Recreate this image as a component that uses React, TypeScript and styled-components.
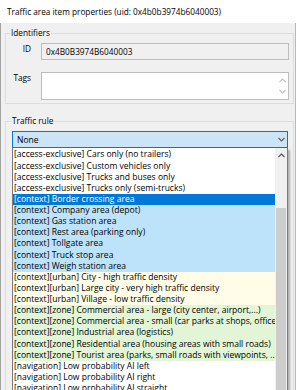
import React from 'react';
import styled, { createGlobalStyle } from 'styled-components';

const Global = createGlobalStyle`
  html, body { margin: 0; padding: 0; background: #ffffff; }
  body {
    width: 300px; height: 390px; overflow: hidden;
    font-family: "Open Sans", "Noto Sans", sans-serif;
    color: #000;
  }
  #root { width: 300px; height: 390px; }
`;

const Window = styled.div`
  width: 300px;
  height: 390px;
  display: flex;
  flex-direction: column;
  overflow: hidden;
  background: #ffffff;
  font-size: 8.25px;
`;

const TitleBar = styled.div`
  height: 23px;
  flex: none;
  display: flex;
  align-items: center;
  padding-left: 7px;
  white-space: nowrap;
  background: #ffffff;
`;

const Body = styled.div`
  flex: 1;
  min-height: 0;
  width: 296px;
  box-sizing: border-box;
  background: #f0f0f0;
  border-left: 1px solid #a3a3a3;
  border-right: 1px solid #b8b8b8;
  padding: 4px 0 0 4px;
  display: flex;
  flex-direction: column;
  gap: 11px;
  overflow: hidden;
`;

const Group = styled.fieldset`
  margin: 0;
  padding: 0;
  width: 289px;
  min-width: 0;
  box-sizing: border-box;
  border: 1px solid #dcdcdc;
  flex: none;
`;

const Legend = styled.legend<{ $offset: number }>`
  padding: 0 1px;
  margin-left: ${p => p.$offset}px;
  line-height: 12px;
  font-size: 8.25px;
  white-space: nowrap;
`;

const FieldGrid = styled.div`
  display: grid;
  grid-template-columns: 25px 1fr;
  column-gap: 10px;
  row-gap: 12px;
  padding: 4px 4px 3px 0;
`;

const FieldLabel = styled.div`
  text-align: right;
  line-height: 12px;
  white-space: nowrap;
`;

const ReadOnlyBox = styled.div`
  height: 17px;
  box-sizing: border-box;
  border: 1px solid #bcbcbc;
  background: #f0f0f0;
  display: flex;
  align-items: center;
  padding-left: 4px;
  white-space: nowrap;
`;

const MultiBox = styled.div`
  height: 28px;
  box-sizing: border-box;
  border: 1px solid #bcbcbc;
  background: #ffffff;
  display: flex;
  justify-content: flex-end;
`;

const MiniScroll = styled.div`
  width: 12px;
  display: flex;
  flex-direction: column;
  align-items: center;
  gap: 6px;
  padding-top: 5px;
`;

const RuleArea = styled.div`
  padding: 4px 5px 0 6px;
  display: flex;
  flex-direction: column;
  font-size: 8.55px;
`;

const Combo = styled.div`
  height: 17px;
  box-sizing: border-box;
  border: 1px solid #0078d7;
  background: #cce4f7;
  display: flex;
  align-items: center;
  justify-content: space-between;
  padding: 0 2px 0 4px;
`;

const DropList = styled.div`
  display: flex;
  border: 1px solid #7a7a7a;
  border-top: none;
  background: #ffffff;
  box-shadow: 2px 2px 2px rgba(0, 0, 0, 0.28);
`;

const Rows = styled.div`
  width: 262px;
  flex: none;
  padding-top: 1.4px;
  display: flex;
  flex-direction: column;
`;

type Kind = 'plain' | 'selected' | 'context' | 'urban' | 'zone';

const rowBg: Record<Kind, string> = {
  plain: '#ffffff',
  selected: '#0078d7',
  context: '#bde3fa',
  urban: '#fffde8',
  zone: '#e2f5d6',
};

const Row = styled.div<{ $kind: Kind }>`
  height: 11.14px;
  line-height: 11.14px;
  padding-left: 1px;
  white-space: nowrap;
  overflow: hidden;
  background: ${p => rowBg[p.$kind]};
  color: ${p => (p.$kind === 'selected' ? '#ffffff' : '#000000')};
`;

const ScrollTrack = styled.div`
  width: 12px;
  flex: none;
  background: #f0f0f0;
  display: flex;
  flex-direction: column;
`;

const ArrowCell = styled.div`
  height: 14px;
  display: flex;
  align-items: center;
  justify-content: center;
`;

const Thumb = styled.div`
  margin: 46px 1px 0 1px;
  height: 240px;
  background: #cdcdcd;
`;

const Chevron: React.FC<{ up?: boolean; color: string }> = ({ up, color }) => (
  <svg width="7" height="5" viewBox="0 0 7 5">
    <polyline
      points={up ? '0.5,4 3.5,1 6.5,4' : '0.5,1 3.5,4 6.5,1'}
      fill="none"
      stroke={color}
      strokeWidth="1.1"
    />
  </svg>
);

const items: { text: string; kind: Kind }[] = [
  { text: '[access-exclusive] Cars only (no trailers)', kind: 'plain' },
  { text: '[access-exclusive] Custom vehicles only', kind: 'plain' },
  { text: '[access-exclusive] Trucks and buses only', kind: 'plain' },
  { text: '[access-exclusive] Trucks only (semi-trucks)', kind: 'plain' },
  { text: '[context] Border crossing area', kind: 'selected' },
  { text: '[context] Company area (depot)', kind: 'context' },
  { text: '[context] Gas station area', kind: 'context' },
  { text: '[context] Rest area (parking only)', kind: 'context' },
  { text: '[context] Tollgate area', kind: 'context' },
  { text: '[context] Truck stop area', kind: 'context' },
  { text: '[context] Weigh station area', kind: 'context' },
  { text: '[context][urban] City - high traffic density', kind: 'urban' },
  { text: '[context][urban] Large city - very high traffic density', kind: 'urban' },
  { text: '[context][urban] Village - low traffic density', kind: 'urban' },
  { text: '[context][zone] Commercial area - large (city center, airport,...)', kind: 'zone' },
  { text: '[context][zone] Commercial area - small (car parks at shops, offices)', kind: 'zone' },
  { text: '[context][zone] Industrial area (logistics)', kind: 'zone' },
  { text: '[context][zone] Residential area (housing areas with small roads)', kind: 'zone' },
  { text: '[context][zone] Tourist area (parks, small roads with viewpoints, ...)', kind: 'zone' },
  { text: '[navigation] Low probability AI left', kind: 'plain' },
  { text: '[navigation] Low probability AI right', kind: 'plain' },
  { text: '[navigation] Low probability AI straight', kind: 'plain' },
];

export default function App() {
  return (
    <>
      <Global />
      <Window>
        <TitleBar>Traffic area item properties (uid: 0x4b0b3974b6040003)</TitleBar>
        <Body>
          <Group>
            <Legend $offset={4}>Identifiers</Legend>
            <FieldGrid>
              <FieldLabel>ID</FieldLabel>
              <ReadOnlyBox>0x4B0B3974B6040003</ReadOnlyBox>
              <FieldLabel>Tags</FieldLabel>
              <MultiBox>
                <MiniScroll>
                  <Chevron up color="#c2c2c2" />
                  <Chevron color="#c2c2c2" />
                </MiniScroll>
              </MultiBox>
            </FieldGrid>
          </Group>
          <Group>
            <Legend $offset={5}>Traffic rule</Legend>
            <RuleArea>
              <Combo>
                <span>None</span>
                <Chevron color="#5a5a5a" />
              </Combo>
              <DropList>
                <Rows>
                  {items.map(it => (
                    <Row key={it.text} $kind={it.kind}>
                      {it.text}
                    </Row>
                  ))}
                </Rows>
                <ScrollTrack>
                  <ArrowCell>
                    <Chevron up color="#505050" />
                  </ArrowCell>
                  <Thumb />
                </ScrollTrack>
              </DropList>
            </RuleArea>
          </Group>
        </Body>
      </Window>
    </>
  );
}
